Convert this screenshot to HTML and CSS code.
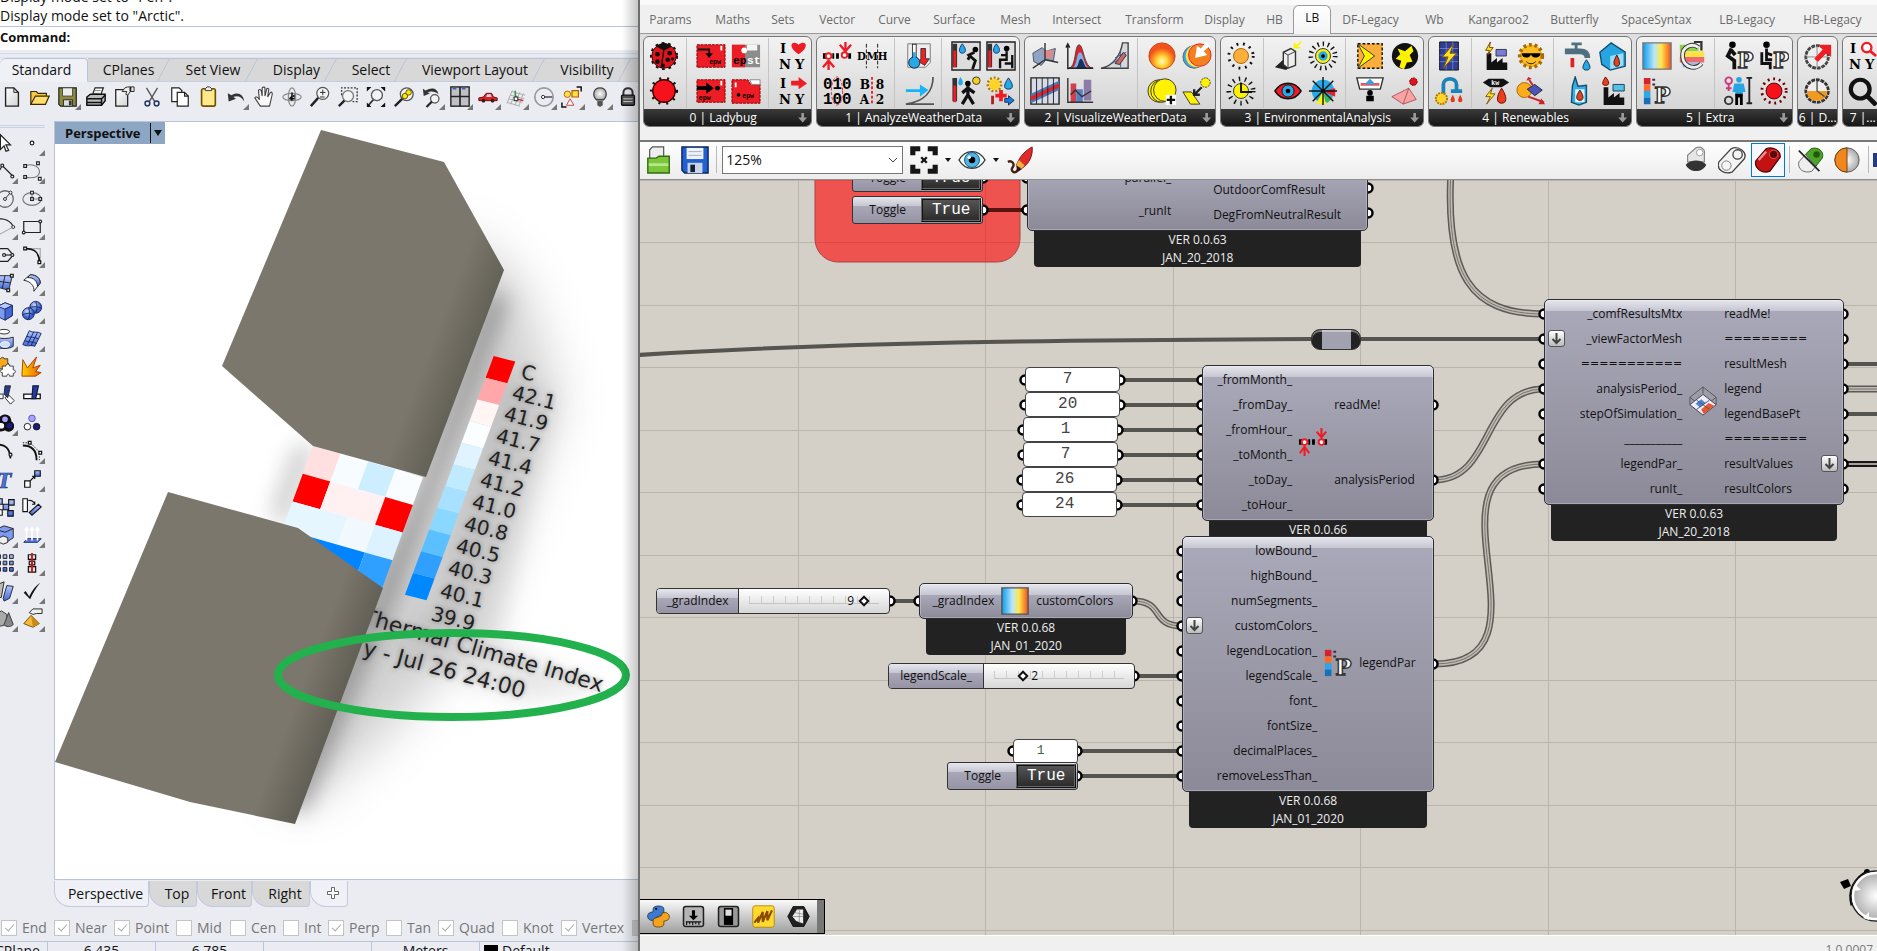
FILE: index.html
```html
<!DOCTYPE html>
<html lang="en">
<head>
<meta charset="utf-8">
<title>Rhino and Grasshopper</title>
<link rel="stylesheet" href="styles.css">
</head>
<body>
<svg class="defs" width="0" height="0" aria-hidden="true">
  <defs>
    <linearGradient id="blue" x1="0" y1="0" x2="0" y2="1"><stop offset="0" stop-color="#b4c8ff"/><stop offset="1" stop-color="#3f66d8"/></linearGradient>
    <linearGradient id="rainbow"><stop offset="0" stop-color="#0b9bef"/><stop offset=".4" stop-color="#b8e6fb"/><stop offset=".65" stop-color="#ffe84a"/><stop offset="1" stop-color="#f2501e"/></linearGradient>
    <radialGradient id="ball" cx=".4" cy=".3"><stop offset="0" stop-color="#c9d6ff"/><stop offset="1" stop-color="#3a60cf"/></radialGradient>
    <radialGradient id="glow" cx=".5" cy=".7"><stop offset="0" stop-color="#fffbd0"/><stop offset=".4" stop-color="#ffd52e"/><stop offset="1" stop-color="#f4521d"/></radialGradient>
    <radialGradient id="silver"><stop offset="0" stop-color="#fff"/><stop offset="1" stop-color="#a9a9a9"/></radialGradient>
    <linearGradient id="fire"><stop offset="0" stop-color="#ffd000"/><stop offset="1" stop-color="#e85d00"/></linearGradient>
    <linearGradient id="page" x1="0" y1="0" x2="1" y2="1"><stop offset="0" stop-color="#fff"/><stop offset="1" stop-color="#d4d4d4"/></linearGradient>
  </defs>
</svg>
<div class="desktop">
<section class="rhino">
  <div class="history"><p>Display mode set to "Pen".</p><p>Display mode set to "Arctic".</p></div>
  <div class="command">Command:</div>
  <div class="grip"></div>
  <nav class="tabs">
    <button class="tab active">Standard</button><button class="tab">CPlanes</button><button class="tab">Set View</button><button class="tab">Display</button><button class="tab">Select</button><button class="tab">Viewport Layout</button><button class="tab">Visibility</button><button class="tab" aria-label="More"></button>
  </nav>
  <div class="toolbar">
    <button class="tool" aria-label="New"><svg viewBox="0 0 24 24"><path d="M5 2h9l5 5v15H5z" fill="url(#page)" stroke="#222" stroke-width="1.5"/><path d="M14 2v5h5" fill="none" stroke="#222"/></svg></button>
    <button class="tool" aria-label="Open"><svg viewBox="0 0 24 24"><path d="M2 20V6h6l2 2h9v3" fill="#f6c845" stroke="#3b2c00" stroke-width="1.3"/><path d="M2 20l5-9h15l-4 9z" fill="#ffdc6b" stroke="#3b2c00" stroke-width="1.3"/></svg></button>
    <button class="tool more" aria-label="Save"><svg viewBox="0 0 24 24"><path d="M2 2h19v20H4l-2-2z" fill="#8d8b39" stroke="#222" stroke-width="1.3"/><path d="M6 2h11v9H6z" fill="#eee" stroke="#444"/><path d="M7 15h10v7H7z" fill="#ddd" stroke="#222"/><path d="M13 16h3v5h-3z" fill="#333"/></svg></button>
    <button class="tool" aria-label="Print"><svg viewBox="0 0 24 24"><path d="M8 10l3-8h9l-3 8z" fill="#fff" stroke="#222" stroke-width="1.3"/><path d="M10 5h7M9 8h7" stroke="#777"/><path d="M2 12l4-3h16v7l-4 5H2z" fill="#bbb" stroke="#111" stroke-width="1.6"/><path d="M2 14h16l4-4M2 18h16M18 14v7" stroke="#111" stroke-width="1.6" fill="none"/></svg></button>
    <button class="tool" aria-label="Properties"><svg viewBox="0 0 24 24"><path d="M3 4h13v18H3z" fill="url(#page)" stroke="#222" stroke-width="1.4"/><path d="M10 6l3-4 3-1h7v5h-4l-3 4-2-1 1-3h-3z" fill="#eee" stroke="#222"/><path d="M19 1v5" stroke="#222" stroke-width="2"/></svg></button>
    <button class="tool" aria-label="Cut"><svg viewBox="0 0 24 24" fill="none"><path d="M6 2l9 15M18 2L9 17" stroke="#555" stroke-width="1.5"/><circle cx="7" cy="19" r="2.6" stroke="#26315f" stroke-width="1.6"/><circle cx="17" cy="19" r="2.6" stroke="#26315f" stroke-width="1.6"/></svg></button>
    <button class="tool" aria-label="Copy"><svg viewBox="0 0 24 24" fill="#fff" stroke="#222" stroke-width="1.3"><path d="M3 2h8l3 3v12H3z"/><path d="M9 7h8l4 4v11H9z"/><path d="M17 7v4h4" fill="none"/></svg></button>
    <button class="tool" aria-label="Paste"><svg viewBox="0 0 24 24"><rect x="5" y="3" width="15" height="19" rx="2" fill="#ffe98a" stroke="#6b5200" stroke-width="1.8"/><path d="M9 5V3l2-2h3l2 2v2z" fill="#eee" stroke="#333"/></svg></button>
    <button class="tool more" aria-label="Undo"><svg viewBox="0 0 24 24"><path d="M3 8l1 9 8-3-3-2c5-2 9 0 12 5-1-8-7-11-14-7z" fill="#333"/></svg></button>
    <button class="tool" aria-label="Pan"><svg viewBox="0 0 24 24"><path d="M8 22l-6-9c1-2 3-1 5 2L6 5c1-2 2-1 3 0l1 6V2c1-1 3-1 3 0v9l2-8c1-1 3 0 2 2l-1 7 3-5c2-1 2 1 2 2l-3 13z" fill="#fafafa" stroke="#444" stroke-width="1.2"/></svg></button>
    <button class="tool" aria-label="Rotate view"><svg viewBox="0 0 24 24" fill="none" stroke="#8a8a8a" stroke-width="1.3"><ellipse cx="12" cy="12" rx="10" ry="4"/><ellipse cx="12" cy="12" rx="4" ry="10"/><path d="M12 7v9M9 14h6" stroke="#111" stroke-width="1.6"/><path d="M9 13l3-3v6zM15 9l-3 2 3 2z" fill="#111" stroke="none"/></svg></button>
    <button class="tool" aria-label="Zoom"><svg viewBox="0 0 24 24"><circle cx="15" cy="8" r="6.5" fill="#f4f4f4" stroke="#555" stroke-width="1.3"/><path d="M10 13l-8 9" stroke="#222" stroke-width="2.6"/><path d="M12 7h6M15 4v6M12 12h5" stroke="#222"/></svg></button>
    <button class="tool" aria-label="Zoom window"><svg viewBox="0 0 24 24" fill="none"><path d="M5 10V2h17v15h-5" stroke="#333" stroke-dasharray="2 1.6" stroke-width="1.4"/><circle cx="12" cy="11" r="6" fill="#f4f4f4" stroke="#777" stroke-width="1.4"/><path d="M8 16l-6 6" stroke="#222" stroke-width="2.6"/></svg></button>
    <button class="tool" aria-label="Zoom extents"><svg viewBox="0 0 24 24" fill="none"><circle cx="13" cy="10" r="6" fill="#f4f4f4" stroke="#555" stroke-width="1.4"/><path d="M9 15l-6 7" stroke="#333" stroke-width="2"/><path d="M2 1h5L2 6zM22 1v5l-5-5zM22 23h-5l5-5zM2 23v-5l5 5z" fill="#111"/></svg></button>
    <button class="tool" aria-label="Zoom selected"><svg viewBox="0 0 24 24"><circle cx="15" cy="9" r="7" fill="#f4f4f4" stroke="#555" stroke-width="1.4"/><path d="M10 14l-8 8" stroke="#222" stroke-width="2.6"/><circle cx="13" cy="11" r="3" fill="#ffe600" stroke="#5a4b00"/><circle cx="17" cy="7" r="3" fill="#ffe600" stroke="#5a4b00"/></svg></button>
    <button class="tool more" aria-label="Undo view"><svg viewBox="0 0 24 24"><path d="M2 3l1 8 7-3-3-1c4-2 9-1 12 2-1-7-8-8-14-4z" fill="#333"/><circle cx="15" cy="14" r="4.6" fill="#f4f4f4" stroke="#555" stroke-width="1.4"/><path d="M12 17l-6 6" stroke="#222" stroke-width="2.4"/></svg></button>
    <button class="tool more" aria-label="Four viewports"><svg viewBox="0 0 24 24"><rect x="2" y="1" width="20" height="21" fill="#c0c0c4" stroke="#222" stroke-width="1.5"/><path d="M12 1v21M2 11.500h20" stroke="#222" stroke-width="1.8"/><path d="M4 3h4M14 3h4" stroke="#36c" stroke-width="1.5"/></svg></button>
    <button class="tool more" aria-label="Car"><svg viewBox="0 0 24 24"><path d="M2 13l5-1 3-4h6l2 4 4 1v3H2z" fill="#e02020" stroke="#700"/><path d="M11 9h4l1 3h-6z" fill="#cde"/><circle cx="7" cy="16" r="2" fill="#222"/><circle cx="17" cy="16" r="2" fill="#222"/></svg></button>
    <button class="tool more" aria-label="Construction plane"><svg viewBox="0 0 24 24" fill="none"><path d="M8 5L2 19M12 6L6 20M16 7l-5 14M20 8l-5 14M7 6l15 4M6 10l15 4M4 14l15 4M3 18l13 4" stroke="#aaa"/><path d="M12 14l-1-9" stroke="#2a9a3a" stroke-width="1.5"/><path d="M12 14l8 2" stroke="#c22" stroke-width="1.5"/><path d="M10 12h4v4h-4z" fill="#fff" stroke="#111"/></svg></button>
    <button class="tool more" aria-label="Circle tools"><svg viewBox="0 0 24 24" fill="none"><circle cx="12" cy="12" r="10" stroke="#999" stroke-width="1.8"/><path d="M12 12h9" stroke="#222" stroke-width="1.3"/><circle cx="11" cy="12" r="1.8" fill="#fff" stroke="#222"/></svg></button>
    <button class="tool more" aria-label="Selection"><svg viewBox="0 0 24 24" fill="none"><circle cx="7" cy="9" r="3.500" fill="#ffe14a" stroke="#b35b00"/><path d="M12 5h7v7h-7z" fill="#ffe14a" stroke="#b35b00" stroke-width="1.3"/><path d="M10 14l4 7H6z" fill="#fff" stroke="#c33"/><path d="M17 1h5v5M1 18v5h5" stroke="#111" stroke-width="1.6"/></svg></button>
    <button class="tool more" aria-label="Hide"><svg viewBox="0 0 24 24"><path d="M8 15c-5-5-3-13 4-13s9 8 4 13z" fill="url(#silver)" stroke="#444" stroke-width="1.4"/><path d="M9 16h6v5l-3 2-3-2z" fill="#555"/></svg></button>
    <button class="tool" aria-label="Lock"><svg viewBox="0 0 24 24"><path d="M7 11V7c0-6 10-6 10 0v4" fill="none" stroke="#333" stroke-width="2.2"/><rect x="5" y="10" width="14" height="11" rx="1" fill="#555" stroke="#111" stroke-width="1.5"/><path d="M7 14h10M7 17h10" stroke="#ddd"/></svg></button>
  </div>
  <div class="workspace">
    <aside class="toolbox">
      <button class="tool" aria-label="Select"><svg viewBox="0 0 24 24"><path d="M7 3l11 11h-5l3 6-3 1-2-6-4 4z" fill="#fff" stroke="#222" stroke-width="1.3"/></svg></button>
      <button class="tool more" aria-label="Point"><svg viewBox="0 0 24 24"><circle cx="12" cy="12" r="2" fill="#fff" stroke="#222" stroke-width="1.3"/></svg></button>
      <button class="tool more" aria-label="Polyline"><svg viewBox="0 0 24 24" fill="#fff" stroke="#222" stroke-width="1.3"><path d="M3 17l6-11 12 12" fill="none"/><circle cx="9" cy="6" r="1.600"/><circle cx="20" cy="18" r="1.600"/></svg></button>
      <button class="tool more" aria-label="Curve"><svg viewBox="0 0 24 24" fill="#fff" stroke="#222" stroke-width="1.2"><path d="M5 6c10-3 16 3 15 8s-8 6-15 5" fill="none" stroke="#777"/><path d="M3 5h3v3H3zM17 2h3v3h-3zM3 17h3v3H3zM19 19h3v3h-3z"/></svg></button>
      <button class="tool more" aria-label="Circle"><svg viewBox="0 0 24 24" fill="#fff" stroke="#222"><circle cx="12" cy="12" r="9" fill="none" stroke="#666" stroke-width="1.4"/><path d="M12 12l6-7"/><circle cx="12" cy="12" r="1.600"/><circle cx="18" cy="5" r="1.600"/></svg></button>
      <button class="tool more" aria-label="Ellipse"><svg viewBox="0 0 24 24" fill="#fff" stroke="#222" stroke-width="1.200"><ellipse cx="12" cy="12" rx="10" ry="7" fill="none" stroke="#777"/><path d="M12 5v7h9" fill="none" stroke="#888"/><path d="M10.500 3.500h3v3h-3zM10.500 10.500h3v3h-3zM19.500 10.500h3v3h-3z"/></svg></button>
      <button class="tool more" aria-label="Arc"><svg viewBox="0 0 24 24" fill="#fff" stroke="#222"><path d="M3 4c8-3 16 2 18 8" fill="none" stroke-width="1.4"/><path d="M21 12L6 20" fill="none" stroke="#999"/><circle cx="21" cy="12" r="1.600"/></svg></button>
      <button class="tool more" aria-label="Rectangle"><svg viewBox="0 0 24 24" fill="#fff" stroke="#222" stroke-width="1.3"><path d="M3 6h18v12H3z" fill="none"/><circle cx="21" cy="6" r="1.500"/><circle cx="3" cy="18" r="1.500"/></svg></button>
      <button class="tool more" aria-label="Polygon"><svg viewBox="0 0 24 24" fill="#fff" stroke="#222" stroke-width="1.3"><path d="M4 5h11l6 7-6 7H4" fill="none"/><path d="M11 12h9"/><circle cx="11" cy="12" r="1.600"/><circle cx="20" cy="12" r="1.600"/></svg></button>
      <button class="tool more" aria-label="Fillet"><svg viewBox="0 0 24 24" fill="#fff" stroke="#111" stroke-width="1.3"><path d="M5 5h16v15" fill="none" stroke="#aaa"/><path d="M5 5c10 0 15 4 15 15" fill="none" stroke-width="2"/><path d="M3 3.500h3v3H3zM18.500 18.500h3v3h-3z"/></svg></button>
      <button class="tool more" aria-label="Surface from points"><svg viewBox="0 0 24 24" stroke="#222"><path d="M5 4h15l-4 16-14-4z" fill="url(#blue)"/><path d="M12 4l-3 14M4 10l14 2" fill="none"/><path d="M18 2.500h3v3h-3zM14 18.500h3v3h-3z" fill="#fff" stroke-width="1.400"/></svg></button>
      <button class="tool more" aria-label="Sweep"><svg viewBox="0 0 24 24" stroke="#222"><path d="M3 9l7-6c7 0 11 4 11 9l-7 9c1-6-4-11-11-12z" fill="#fff"/><path d="M7 6c7 0 11 4 11 10l3-4c0-5-4-9-11-9z" fill="url(#blue)"/></svg></button>
      <button class="tool more" aria-label="Box"><svg viewBox="0 0 24 24" stroke="#1b2c66"><path d="M4 7l8-4 8 3v11l-8 5-8-4z" fill="#7c9af0"/><path d="M4 7l8 3 8-4-8-3z" fill="#b9caff"/><path d="M12 10v12l8-5V6z" fill="#4468d4"/></svg></button>
      <button class="tool more" aria-label="Sphere"><svg viewBox="0 0 24 24" stroke="#16265c" fill="url(#ball)"><circle cx="16" cy="8" r="6.500"/><circle cx="8" cy="15" r="6.500"/><path d="M2 16c4-2 8-2 12 0M8 8c2 5 2 9 0 13M10 8c4-1 8-1 12 1M16 2c2 4 2 8 0 12" fill="none"/></svg></button>
      <button class="tool more" aria-label="Tube"><svg viewBox="0 0 24 24" stroke="#222"><ellipse cx="11" cy="4" rx="6" ry="2.500" fill="#fff"/><path d="M3 10c4 2 12 2 18 0v10c-4 3-14 3-18 1z" fill="url(#blue)"/><ellipse cx="12" cy="18" rx="5" ry="3" fill="#cfe0ff" stroke="#fff"/></svg></button>
      <button class="tool more" aria-label="Mesh"><svg viewBox="0 0 24 24" stroke="#16265c"><path d="M9 3c4 3 9 0 13 3l-7 14c-4-2-8 1-13-2z" fill="url(#blue)"/><path d="M6 9c5 2 8 0 13 3M4 14c5 2 8 0 13 3M14 4L7 18M18 5l-7 14" fill="none"/></svg></button>
      <button class="tool" aria-label="Join"><svg viewBox="0 0 24 24" stroke="#333"><path d="M3 3h4c1-2 4-2 4 0h4v5c2 0 2 3 0 3v3H3z" fill="#f7a81c"/><path d="M9 11h4c0-3 4-3 4 0h4v4c3 0 3 4 0 4v3h-4c0-3-3-3-3 0H9v-4c-3 0-3-3 0-3z" fill="#fff"/></svg></button>
      <button class="tool" aria-label="Explode"><svg viewBox="0 0 24 24"><path d="M1 22L2 4l5 9L17 1l-4 12 8-3-5 7 6 1-6 4z" fill="url(#fire)" stroke="#a33c00"/></svg></button>
      <button class="tool" aria-label="Trim"><svg viewBox="0 0 24 24" stroke="#222"><path d="M2 11h8v5H2z" fill="#fff"/><path d="M12 15l4-3 6 6-4 4z" fill="#fff"/><path d="M12 2h6l-3 13-4-4z" fill="#243c96"/></svg></button>
      <button class="tool" aria-label="Split"><svg viewBox="0 0 24 24" stroke="#111" stroke-width="1.400"><path d="M3 11h18v5H3z" fill="#fff"/><path d="M13 2h6l-3 14h-4z" fill="#243c96" stroke="#101c4c"/></svg></button>
      <button class="tool more" aria-label="Group"><svg viewBox="0 0 24 24" stroke="#111" stroke-width="1.800"><path d="M6 11c-1-10 13-10 12 0 7 5 0 13-6 8-8 5-12-5-6-8z" fill="#111"/><circle cx="12" cy="8" r="4" fill="#a9a3ff"/><circle cx="17" cy="15" r="4" fill="#1c1c80"/><circle cx="8" cy="15" r="4" fill="#fff"/></svg></button>
      <button class="tool" aria-label="Ungroup"><svg viewBox="0 0 24 24" stroke="#111"><circle cx="12" cy="7" r="3.600" fill="#a9a3ff" stroke="#5551b0"/><circle cx="7" cy="16" r="3.600" fill="#fff"/><circle cx="17" cy="16" r="3.600" fill="#1c1c80"/></svg></button>
      <button class="tool" aria-label="Edit curve"><svg viewBox="0 0 24 24" fill="none" stroke="#111" stroke-width="2"><path d="M3 5c9 0 14 3 15 15"/><circle cx="18" cy="16" r="1.600" fill="#fff" stroke-width="1.300"/></svg></button>
      <button class="tool more" aria-label="Control points"><svg viewBox="0 0 24 24" fill="none" stroke="#111"><path d="M2 6c9 0 15 5 15 16" stroke-width="2"/><path d="M2 3h8l10 10v9" stroke-dasharray="1.500 1.500"/><path d="M8 1.500h3v3H8zM19.500 12.500h3v3h-3z" fill="#fff" stroke-width="1.300"/></svg></button>
      <button class="tool" aria-label="Text"><svg viewBox="0 0 24 24"><text x="3" y="22" font-family="Liberation Serif, serif" font-weight="bold" font-style="italic" font-size="26" fill="#4d74e6" stroke="#1b2c66" stroke-width=".7">T</text></svg></button>
      <button class="tool more" aria-label="Move"><svg viewBox="0 0 24 24" stroke="#111" stroke-width="1.300"><path d="M4 14h6v7H4z" fill="#fff"/><path d="M15 3h6v6h-6z" fill="url(#blue)"/><path d="M10 14l5-5M12 9h3v3" fill="none"/></svg></button>
      <button class="tool" aria-label="Copy objects"><svg viewBox="0 0 24 24" stroke="#111" stroke-width="1.200" fill="url(#blue)"><path d="M4 3h5v6H4zM10 9h6v6h-6zM16 4h6v6h-6zM15 16h6v6h-6z"/><path d="M4 15h5v6H4z" fill="#fff"/></svg></button>
      <button class="tool" aria-label="Rotate"><svg viewBox="0 0 24 24" stroke="#111" stroke-width="1.200"><path d="M2 3h5v14H2z" fill="#fff"/><path d="M9 18L19 9l3 3-10 9z" fill="url(#blue)"/><path d="M8 5c3-1 6 1 7 4M15 6v3h-3" fill="none"/></svg></button>
      <button class="tool more" aria-label="Boolean"><svg viewBox="0 0 24 24" stroke="#222"><path d="M2 6l9-4 10 3v10l-9 6-10-4z" fill="#7c9af0"/><path d="M2 6l10 3 9-4" fill="none"/><path d="M6 15l4-2 5 2v5l-5 2-4-2z" fill="#eee"/></svg></button>
      <button class="tool more" aria-label="Extrude"><svg viewBox="0 0 24 24"><path d="M3 20l4-4h15l-4 4z" fill="#5577dd" stroke="#16265c"/><path d="M6 18V5M12 18V5M18 18V5M4 7l2-3 2 3M10 7l2-3 2 3M16 7l2-3 2 3" fill="none" stroke="#fff" stroke-width="1.800"/></svg></button>
      <button class="tool more" aria-label="Array"><svg viewBox="0 0 24 24" stroke="#111" fill="url(#blue)"><path d="M3 3h4v4H3zM10 3h4v4h-4zM17 3h4v4h-4zM3 10h4v4H3zM10 10h4v4h-4zM17 10h4v4h-4zM3 17h4v4H3zM10 17h4v4h-4zM17 17h4v4h-4z"/></svg></button>
      <button class="tool more" aria-label="Align"><svg viewBox="0 0 24 24" stroke="#111" stroke-width="1.300" fill="#ddd"><path d="M8 3h8v5H8zM9 10h6v4H9zM8 16h8v6H8z"/><path d="M12 1v22" stroke="#c11" stroke-width="2"/></svg></button>
      <button class="tool more" aria-label="Bend"><svg viewBox="0 0 24 24" stroke="#222"><path d="M2 20L6 4l5-2-3 17z" fill="#bbb"/><path d="M10 20l4-14 7 1-4 13-6 3z" fill="url(#blue)"/></svg></button>
      <button class="tool more" aria-label="Check"><svg viewBox="0 0 24 24"><path d="M3 14l2-2 4 6C12 12 15 7 21 3c-5 6-8 11-11 18z" fill="#111"/></svg></button>
      <button class="tool more" aria-label="Solids"><svg viewBox="0 0 24 24" stroke="#333"><path d="M2 8l6-5 6 4v11l-8 2-4-2z" fill="#aaa"/><path d="M16 5l5 13c-3 3-8 3-10 0z" fill="#888"/></svg></button>
      <button class="tool more" aria-label="Block"><svg viewBox="0 0 24 24"><path d="M3 17l8-9 9 9-7 4z" fill="#f5b93c" stroke="#6b4a00"/><path d="M11 8l2 13 7-4z" fill="#c98a1c"/><path d="M9 5l4-4h10v5h-6l-4 1z" fill="#eee" stroke="#222"/></svg></button>
    </aside>
    <div class="viewport-column">
      <div class="viewport">
        <svg class="scene" aria-label="Perspective view">
          <defs>
            <filter id="soft" x="-40%" y="-40%" width="180%" height="180%"><feGaussianBlur stdDeviation="24"/></filter>
            <filter id="near" x="-60%" y="-60%" width="220%" height="220%"><feGaussianBlur stdDeviation="11"/></filter>
            <linearGradient id="wall1" gradientUnits="userSpaceOnUse" x1="426" y1="358" x2="465" y2="373"><stop offset="0" stop-color="#7b776c"/><stop offset="1" stop-color="#646157"/></linearGradient>
            <linearGradient id="wall2" gradientUnits="userSpaceOnUse" x1="300" y1="691" x2="339" y2="706"><stop offset="0" stop-color="#7b776c"/><stop offset="1" stop-color="#625f56"/></linearGradient>
          </defs>
          <g transform="translate(-55 -122)">
            <path d="M460 230L520 280 560 400 470 640 380 740 310 800 270 790 430 480z" fill="#999" opacity=".45" filter="url(#soft)"/>
            <path d="M490 290L508 300 400 590 304 815 280 800 420 480z" fill="#555" opacity=".5" filter="url(#near)"/>
            <path d="M296 446L313 446 285 526 272 515z" fill="#666" opacity=".4" filter="url(#near)"/>
            <path d="M495 368L555 395 500 640 600 690 520 700 390 650 440 600z" fill="#888" opacity=".2" filter="url(#near)"/>
            <g transform="matrix(27.5 7.8 -10.2 27.7 313 446)">
              <path d="M0 0h1v1H0z" fill="#ffdfe0"/><path d="M1 0h1v1H1z" fill="#f6fcff"/><path d="M2 0h1v1H2z" fill="#cdeeff"/><path d="M3 0h1v1H3z" fill="#fafdff"/>
              <path d="M0 1h1v1H0z" fill="#f00"/><path d="M1 1h2v1H1z" fill="#fff1f1"/><path d="M3 1h1v1H3z" fill="#f00"/>
              <path d="M0 2h2v1H0z" fill="#e6f6ff"/><path d="M2 2h1v1H2z" fill="#f1f9ff"/><path d="M3 2h1v1H3z" fill="#dcf3ff"/>
              <path d="M0 3h3v1H0z" fill="#0084ff"/><path d="M3 3h1v1.100H3z" fill="#2fa0ff"/>
            </g>
            <g transform="matrix(21.600 5.600 -8.070 21.700 493.700 356)">
              <path d="M0 0h1v1H0z" fill="#f00"/><path d="M0 1h1v1H0z" fill="#ffa7a9"/><path d="M0 2h1v1H0z" fill="#fff5f5"/><path d="M0 3h1v1H0z" fill="#fafeff"/><path d="M0 4h1v1H0z" fill="#dff4ff"/><path d="M0 5h1v1H0z" fill="#c0ebff"/><path d="M0 6h1v1H0z" fill="#a8e1ff"/><path d="M0 7h1v1H0z" fill="#8ad7ff"/><path d="M0 8h1v1H0z" fill="#5bc0ff"/><path d="M0 9h1v1H0z" fill="#2fa0ff"/><path d="M0 10h1v1H0z" fill="#08f"/>
            </g>
            <g class="legend">
              <text transform="translate(520 378) rotate(14)">C</text>
              <text transform="translate(511 399) rotate(14)">42.1</text>
              <text transform="translate(503 420) rotate(14)">41.9</text>
              <text transform="translate(495 442) rotate(14)">41.7</text>
              <text transform="translate(487 464) rotate(14)">41.4</text>
              <text transform="translate(479 486) rotate(14)">41.2</text>
              <text transform="translate(471 508) rotate(14)">41.0</text>
              <text transform="translate(463 530) rotate(14)">40.8</text>
              <text transform="translate(455 552) rotate(14)">40.5</text>
              <text transform="translate(447 574) rotate(14)">40.3</text>
              <text transform="translate(439 597) rotate(14)">40.1</text>
              <text transform="translate(430 620) rotate(14)">39.9</text>
            </g>
            <g class="legend title">
              <text transform="translate(601 692) rotate(16)">Thermal Climate Index</text>
              <text transform="translate(523 698) rotate(15)">y - Jul 26 24:00</text>
            </g>
            <path d="M321 130L444 162 504 270 426 477 313 446 222 366z" fill="url(#wall1)"/>
            <path d="M168 492L298 528 383 588 295 824 190 802 55 762z" fill="url(#wall2)"/>
            <ellipse cx="452" cy="675" rx="174" ry="42" fill="none" stroke="#22b14c" stroke-width="8"/>
          </g>
        </svg>
        <button class="view-title"><span>Perspective</span><i></i></button>
      </div>
      <nav class="view-tabs">
        <button class="view-tab active">Perspective</button><button class="view-tab">Top</button><button class="view-tab">Front</button><button class="view-tab">Right</button><button class="view-tab active add" aria-label="Add viewport"><svg viewBox="0 0 12 12"><path d="M4.500 .5h3v4h4v3h-4v4h-3v-4h-4v-3h4z" fill="#fff" stroke="#666"/></svg></button>
      </nav>
    </div>
  </div>
  <div class="osnap">
    <label><input type="checkbox" checked>End</label><label><input type="checkbox" checked>Near</label><label><input type="checkbox" checked>Point</label><label><input type="checkbox">Mid</label><label><input type="checkbox">Cen</label><label><input type="checkbox">Int</label><label><input type="checkbox" checked>Perp</label><label><input type="checkbox">Tan</label><label><input type="checkbox" checked>Quad</label><label><input type="checkbox">Knot</label><label><input type="checkbox" checked>Vertex</label><label><input class="off" type="checkbox" aria-label="Project"></label>
  </div>
  <div class="rhino-status"><span>CPlane</span><span>6.435</span><span>6.785</span><span></span><span>Meters</span><span><b></b>Default</span></div>
</section>

<section class="gh">
  <nav class="gh-tabs">
    <button>Params</button><button>Maths</button><button>Sets</button><button>Vector</button><button>Curve</button><button>Surface</button><button>Mesh</button><button>Intersect</button><button>Transform</button><button>Display</button><button>HB</button><button class="current">LB</button><button>DF-Legacy</button><button>Wb</button><button>Kangaroo2</button><button>Butterfly</button><button>SpaceSyntax</button><button>LB-Legacy</button><button>HB-Legacy</button>
  </nav>
  <div class="ribbon">
    <section class="group">
      <div class="icons">
        <div class="cluster">
          <svg viewBox="0 0 32 32"><circle cx="16" cy="16" r="14" fill="none" stroke="#111" stroke-width="2" stroke-dasharray="3 4"/><circle cx="16" cy="16" r="13" fill="#e3131b" stroke="#300"/><path d="M8 6c4-5 12-5 16 0l-8 4z" fill="#111"/><path d="M16 8l-3 21" stroke="#111" stroke-width="1.500"/><g fill="#111"><circle cx="9" cy="14" r="2.500"/><circle cx="22" cy="13" r="2.500"/><circle cx="9" cy="22" r="2.500"/><circle cx="20" cy="20" r="2.500"/><circle cx="25" cy="19" r="1.800"/><circle cx="15" cy="26" r="2"/></g></svg>
          <svg viewBox="0 0 32 32"><circle cx="16" cy="16" r="13" fill="none" stroke="#111" stroke-width="4" stroke-dasharray="2 6"/><circle cx="16" cy="16" r="12" fill="#f5121c" stroke="#400" stroke-width="1.500"/></svg>
        </div>
        <div class="cluster">
          <svg viewBox="0 0 32 32"><path d="M1 4h30v24H1z" fill="#ee1c25" stroke="#7c0000" stroke-dasharray="3 1"/><path d="M2 9h12v5" fill="none" stroke="#111" stroke-width="2"/><path d="M10 13h8l-4 5z"/><path d="M27 5v5" stroke="#fff" stroke-width="2"/><text x="14" y="24" class="mini">epw</text></svg>
          <svg viewBox="0 0 32 32"><path d="M1 4h30v24H1z" fill="#8c8c8c"/><path d="M1 4h14v24H1z" fill="#ee1c25"/><circle cx="14" cy="10" r="3" fill="#fff"/><path d="M17 4h11v6H17z" fill="#f4f4f4"/><text x="2" y="24" class="mini big">ep</text><text x="17" y="25" class="mini big light">st</text></svg>
          <svg viewBox="0 0 32 32"><path d="M1 4h30v24H1z" fill="#ee1c25" stroke="#7c0000" stroke-dasharray="3 1"/><path d="M1 11h10V7l8 6-8 6v-4H1z"/><circle cx="23" cy="13" r="2.500"/><path d="M27 5v5" stroke="#fff" stroke-width="2"/><text x="3" y="26" class="mini">epw</text></svg>
          <svg viewBox="0 0 32 32"><path d="M1 4h17l3 5h10v20H1z" fill="#ee1c25" stroke="#7c0000" stroke-dasharray="3 1"/><path d="M20 4h11v5H22z" fill="#fff" stroke="#888"/><circle cx="8" cy="20" r="2"/><path d="M5 7v5" stroke="#fff" stroke-width="2"/><text x="12" y="23" class="mini">epw</text></svg>
        </div>
        <div class="cluster">
          <svg viewBox="0 0 32 32"><text x="2" y="13" class="slab">I</text><path d="M22 14C9 6 15-2 22 4c7-6 13 2 0 10z" fill="#ee1c25"/><text x="1" y="30" class="slab">N</text><text x="18" y="30" class="slab">Y</text></svg>
          <svg viewBox="0 0 32 32"><text x="2" y="13" class="slab">I</text><path d="M14 5h8V1l9 7-9 6v-4h-8z" fill="#ee1c25"/><text x="1" y="30" class="slab">N</text><text x="18" y="30" class="slab">Y</text></svg>
        </div>
      </div>
      <footer><span>0 | Ladybug</span><i></i></footer>
    </section>
    <section class="group">
      <div class="icons">
        <div class="cluster">
          <svg viewBox="0 0 32 32"><path d="M1 13h6v6H1zM11 13h2v6h-2zM15 13h3v6h-3zM28 13h3v6h-3z"/><path d="M7 31V20M1 28l6-7 6 7M25 1v11M19 4l6 7 6-7" fill="none" stroke="#ee1c25" stroke-width="2.500"/><circle cx="7" cy="16" r="3" fill="#fff" stroke="#ee1c25" stroke-width="2"/><circle cx="24" cy="15" r="3" fill="#fff" stroke="#ee1c25" stroke-width="2"/></svg>
          <svg viewBox="0 0 32 32"><text x="0" y="20" class="slab tiny">D</text><text x="10" y="20" class="slab tiny">M</text><text x="22" y="20" class="slab tiny">H</text><path d="M10 3v26M22 3v26" stroke="#111" stroke-dasharray="4 2"/></svg>
          <svg viewBox="0 0 32 32"><text x="1" y="14" class="bits">010</text><text x="1" y="30" class="bits">100</text><ellipse cx="16" cy="16" rx="6" ry="15" fill="none" stroke="#ee1c25" stroke-dasharray="3 2"/></svg>
          <svg viewBox="0 0 32 32"><text x="3" y="14" class="slab small">B</text><text x="20" y="14" class="slab small">8</text><text x="3" y="30" class="slab small">A</text><text x="20" y="30" class="slab small">2</text><path d="M16 1v30" stroke="#ee1c25" stroke-width="2" stroke-dasharray="3 2"/></svg>
        </div>
        <div class="cluster">
          <svg viewBox="0 0 32 32"><path d="M4 3h24v20l-5 5H4z" fill="#eee" stroke="#777"/><path d="M11 3v18" stroke="#333" stroke-width="5"/><path d="M11 4v18" stroke="#fff" stroke-width="3"/><circle cx="11" cy="23" r="6" fill="#25a9e8" stroke="#113"/><path d="M18 8h5v11h4l-5 7-6-4 2-3z" fill="#e22" stroke="#333"/><path d="M11 12v10" stroke="#25a9e8" stroke-width="3"/></svg>
          <svg viewBox="0 0 32 32"><path d="M31 1c0 14-8 26-29 29h30" fill="none" stroke="#555" stroke-width="1.800"/><path d="M2 14h15v-5l9 6-9 7v-5H2z" fill="#17b5f3"/></svg>
        </div>
        <div class="cluster">
          <svg viewBox="0 0 32 32"><path d="M1 1h30v30H1z" fill="#ddd" stroke="#222" stroke-width="1.500"/><path d="M4 3v25" stroke="#333" stroke-width="5"/><path d="M4 10v18" stroke="#ee1c25" stroke-width="3"/><path d="M12 3c5 6 4 10 0 10s-4-5 0-10z" fill="#25a9e8" stroke="#137"/><circle cx="26" cy="9" r="3"/><path d="M25 12l-6 3 7 6-3 9M21 14l-3 6" fill="none" stroke="#111" stroke-width="3"/></svg>
          <svg viewBox="0 0 32 32"><path d="M1 1h30v30H1z" fill="#ddd" stroke="#222" stroke-width="1.500"/><path d="M4 3v25" stroke="#333" stroke-width="5"/><path d="M4 10v18" stroke="#ee1c25" stroke-width="3"/><path d="M11 3c5 6 4 10 0 10s-4-5 0-10z" fill="#25a9e8" stroke="#137"/><circle cx="22" cy="8" r="3"/><path d="M22 11v9h-7v9M28 15v14M20 24h9M16 15h6" fill="none" stroke="#111" stroke-width="2.500"/></svg>
          <svg viewBox="0 0 32 32"><path d="M4 2v25" stroke="#333" stroke-width="5"/><path d="M4 10v18" stroke="#ee1c25" stroke-width="3"/><path d="M10 1c4 5 3 9 0 9s-3-4 0-9z" fill="#25a9e8"/><circle cx="27" cy="5" r="4" fill="#f4d11c" stroke="#333"/><circle cx="18" cy="8" r="3"/><path d="M18 11v9l-6 10M18 20l6 10M12 18l6-5 7 5" fill="none" stroke="#111" stroke-width="3.500"/></svg>
          <svg viewBox="0 0 32 32"><circle cx="9" cy="9" r="7" fill="none" stroke="#b07c00" stroke-width="3" stroke-dasharray="2 2"/><circle cx="9" cy="9" r="6" fill="#ffd327"/><path d="M24 2c6 8 5 12 0 12s-6-4 0-12z" fill="#25a9e8" stroke="#135"/><path d="M14 15h4v4h4v4h-4v4h-4v-4h-4v-4h4z" fill="#ee1c25"/><path d="M20 24h4v-3l6 5-6 5v-3h-4z" fill="#1c79d8" stroke="#135"/><path d="M7 21v9" stroke="#a22" stroke-width="3"/></svg>
        </div>
      </div>
      <footer><span>1 | AnalyzeWeatherData</span><i></i></footer>
    </section>
    <section class="group">
      <div class="icons">
        <div class="cluster">
          <svg viewBox="0 0 32 32"><path d="M3 13l10-6 4 4 10-3-2 13-8-1-5 6-8-4z" fill="#8fa4c4" stroke="#456"/><path d="M13 11l12-2-1 10-8-1z" fill="#d98a8a"/><path d="M16 2v18l14 3M16 20L3 29" fill="none" stroke="#333" stroke-width="1.500"/></svg>
          <svg viewBox="0 0 32 32"><path d="M4 29c8 0 6-25 11-25s5 25 15 25z" fill="#e2222b" stroke="#444"/><path d="M7 29c6 0 5-17 9-17s4 17 11 17z" fill="#7ab4ea"/><path d="M10 29c5 0 4-10 7-10s3 10 8 10z" fill="#17335e"/><path d="M3 30V4M1 7l2-4 2 4M3 29h27" fill="none" stroke="#222" stroke-width="1.500"/></svg>
          <svg viewBox="0 0 32 32"><path d="M1 29C14 27 22 15 24 2h6v27z" fill="#d8d8dc" stroke="#444" stroke-width="1.500"/><path d="M12 24l16-8M16 18l12-6M22 10v18" stroke="#366098"/><path d="M16 24l9-12 3 3-7 10z" fill="#c66" stroke="#333"/></svg>
          <svg viewBox="0 0 32 32"><path d="M1 2h30v28H1z" fill="#d6dbe6" stroke="#222" stroke-width="1.500"/><path d="M1 19L31 5v10L1 29z" fill="#4878b8"/><path d="M1 24L31 10" stroke="#e2222b" stroke-width="4"/><path d="M7 2v28M13 2v28M19 2v28M25 2v28" stroke="#222"/></svg>
          <svg viewBox="0 0 32 32"><path d="M6 8h6v20H6z" fill="#d0414c"/><path d="M12 14h7v14h-7z" fill="#577fc4"/><path d="M20 4h8v22h-8z" fill="#8c7ca8"/><path d="M3 2v26h27M6 20l5-5 7 7 10-6" fill="none" stroke="#333" stroke-width="1.500"/></svg>
        </div>
        <div class="cluster">
          <svg viewBox="0 0 32 32"><circle cx="16" cy="16" r="14" fill="url(#glow)" stroke="#c24a10"/></svg>
          <svg viewBox="0 0 32 32"><circle cx="13" cy="17" r="12" fill="#35a6e8" stroke="#666"/><circle cx="16" cy="16" r="12" fill="#ffe14a"/><circle cx="19" cy="15" r="12" fill="#f5801f" stroke="#d23"/><path d="M30 5l-7 6 4 4-13 3 2-13 4 3 6-7z" fill="#fff"/></svg>
          <svg viewBox="0 0 32 32"><circle cx="13" cy="16" r="12" fill="#fff200" stroke="#333"/><circle cx="16" cy="16" r="12" fill="#fff200" stroke="#333"/><circle cx="19" cy="15" r="12" fill="#fff200" stroke="#333"/><path d="M20 20h11v11H20z" fill="#fff"/><path d="M25.500 21v9M21 25.500h9" stroke="#111" stroke-width="2.500"/></svg>
          <svg viewBox="0 0 32 32"><path d="M1 17h9l9 13H9z" fill="#fff200" stroke="#333"/><circle cx="25" cy="7" r="5" fill="#fff200" stroke="#333" stroke-dasharray="2 1"/><path d="M21 12l-8 8M13 14v6h6" fill="none" stroke="#222" stroke-width="2.500"/></svg>
        </div>
      </div>
      <footer><span>2 | VisualizeWeatherData</span><i></i></footer>
    </section>
    <section class="group">
      <div class="icons">
        <div class="cluster">
          <svg viewBox="0 0 32 32"><circle cx="16" cy="16" r="13" fill="none" stroke="#111" stroke-width="3" stroke-dasharray="2 5"/><circle cx="16" cy="16" r="8" fill="#fbae3c" stroke="#a60"/></svg>
          <svg viewBox="0 0 32 32"><circle cx="16" cy="16" r="13" fill="none" stroke="#111" stroke-width="5" stroke-dasharray="1.500 5"/><circle cx="16" cy="16" r="8" fill="#fff200" stroke="#333"/><path d="M16 7v10h12" fill="none" stroke="#111" stroke-width="2"/></svg>
        </div>
        <div class="cluster">
          <svg viewBox="0 0 32 32"><path d="M2 28l10-9 12 3-10 9z" fill="#222"/><path d="M11 12l8-4 5 3v15l-8 3-5-4z" fill="#eee" stroke="#333" stroke-width="1.500"/><path d="M11 12l5 3 8-4M16 15v13" fill="none" stroke="#333"/><path d="M30 1l-6 5M23 2v5h6" fill="none" stroke="#fff200" stroke-width="2"/></svg>
          <svg viewBox="0 0 32 32"><circle cx="16" cy="16" r="13" fill="none" stroke="#111" stroke-width="5" stroke-dasharray="1.500 4"/><circle cx="16" cy="16" r="8" fill="#fff200" stroke="#333"/><circle cx="16" cy="16" r="5" fill="#25a9e8"/><circle cx="16" cy="16" r="2"/></svg>
          <svg viewBox="0 0 32 32"><path d="M2 16C9 5 23 5 30 16 23 27 9 27 2 16z" fill="#ee1c25" stroke="#111" stroke-width="1.500"/><circle cx="16" cy="16" r="6.500" fill="#25a9e8" stroke="#111"/><circle cx="16" cy="16" r="2.500"/></svg>
          <svg viewBox="0 0 32 32"><circle cx="16" cy="16" r="12" fill="#25a9e8"/><path d="M16 16l13-3v9z" fill="#ee1c25"/><path d="M16 16L9 29l10 1z" fill="#fff200"/><path d="M16 16l4 13 6-5z" fill="#3b5"/><path d="M16 1v30M1 16h30M5 5l22 22M27 5L5 27" stroke="#111" stroke-width="1.500"/></svg>
        </div>
        <div class="cluster">
          <svg viewBox="0 0 32 32"><path d="M3 3h26v26H3z" fill="#fbae3c" stroke="#111" stroke-width="1.500" stroke-dasharray="3 2"/><path d="M3 3l18 13L3 29l7-13z" fill="#fff200" stroke="#333"/></svg>
          <svg viewBox="0 0 32 32"><circle cx="16" cy="16" r="14" fill="#111"/><path d="M8 8l8 3 7-6 2 6-4 4 3 7-6 1-3 7-5-2 2-7-6-2 5-5z" fill="#fff200"/></svg>
          <svg viewBox="0 0 32 32"><path d="M2 2h28l-3 12H5z" fill="#fff" stroke="#333" stroke-width="1.500"/><path d="M6 9h20" stroke="#e55" stroke-width="3"/><path d="M16 3l6 6H10z" fill="#49d"/><circle cx="16" cy="18" r="3"/><path d="M12 21h8v6h-8zM9 31l2-5M23 31l-2-5"/></svg>
          <svg viewBox="0 0 32 32"><path d="M2 22l18-9 8 12-14 5z" fill="#f9a3a5" stroke="#a55"/><path d="M14 30l6-17" stroke="#a55"/><circle cx="25" cy="6" r="4" fill="#e2131c" stroke="#500" stroke-dasharray="2 1"/></svg>
        </div>
      </div>
      <footer><span>3 | EnvironmentalAnalysis</span><i></i></footer>
    </section>
    <section class="group">
      <div class="icons">
        <div class="cluster">
          <svg viewBox="0 0 32 32"><path d="M6 1h20v30H6z" fill="#2f3f93" stroke="#111"/><path d="M13 1v30M20 1v30M6 8h20M6 15h20M6 22h20" stroke="#8ea0ef" stroke-width=".6"/><path d="M21 3L9 17h6l-5 12 14-16h-7z" fill="#ffe420" stroke="#850"/></svg>
          <svg viewBox="0 0 32 32"><path d="M10 20V9c0-8 14-8 14 0v6" fill="none" stroke="#1b83b8" stroke-width="4"/><path d="M18 16h12" stroke="#1b83b8" stroke-width="4"/><circle cx="8" cy="24" r="6" fill="#ffd327" stroke="#a70" stroke-width="2" stroke-dasharray="2 1"/><path d="M20 20c3 5 3 8 0 8s-3-3 0-8zM28 20c3 5 3 8 0 8s-3-3 0-8z" fill="#e43a1c"/></svg>
        </div>
        <div class="cluster">
          <svg viewBox="0 0 32 32"><path d="M6 31V13h5v10l6-5v5l6-5v5h5v8z" fill="#111"/><path d="M10 1L5 10h4l-2 5 6-8H9z" fill="#ffe420" stroke="#740"/><path d="M16 9h11v7H16z" fill="#7b7bd8" stroke="#334"/></svg>
          <svg viewBox="0 0 32 32"><circle cx="16" cy="16" r="12" fill="#fbb116" stroke="#a86a00" stroke-width="4" stroke-dasharray="3 3"/><circle cx="16" cy="16" r="10" fill="#fdbb24"/><path d="M6 13h20c0 6-9 6-10 1-1 5-10 5-10-1z"/><path d="M11 22c3 3 7 3 10 0" fill="none" stroke="#111"/></svg>
          <svg viewBox="0 0 32 32"><path d="M2 7l6-4h16l6 4-8 5H10z" fill="#111"/><text x="11" y="10" class="mini light">kw</text><path d="M12 13L5 22h5l-4 8 9-11h-5z" fill="#ffe420" stroke="#850"/><path d="M22 13c6 9 6 16 0 16s-6-7 0-16z" fill="#e8401a" stroke="#700"/></svg>
          <svg viewBox="0 0 32 32"><circle cx="9" cy="15" r="8" fill="#fbae1c" stroke="#a60"/><path d="M12 14l8-5 8 6-8 6z" fill="#4b56b8" stroke="#223"/><path d="M14 4l4 6M13 22l17 6" stroke="#c22" stroke-width="2"/><path d="M11 5l2-4 4 2zM27 24l4 6-7 0z" fill="#c22"/></svg>
        </div>
        <div class="cluster">
          <svg viewBox="0 0 32 32"><path d="M2 11h16c6 0 8 3 8 7" fill="none" stroke="#4f6f80" stroke-width="6"/><path d="M14 2v8M9 3h11" stroke="#4f6f80" stroke-width="3"/><path d="M10 18v10" stroke="#d22" stroke-width="4"/><path d="M25 20c5 7 5 11 0 11s-5-4 0-11z" fill="#25a9e8" stroke="#135"/></svg>
          <svg viewBox="0 0 32 32"><path d="M2 12L14 2l15 10v15l-16 4-9-6z" fill="#27a5e2" stroke="#14506e" stroke-width="1.500"/><path d="M13 16l14-3v13l-14 4z" fill="#9fdcf7"/><path d="M20 15c4 7 4 12 0 12s-4-5 0-12z" fill="#e8401a" stroke="#222"/></svg>
          <svg viewBox="0 0 32 32"><path d="M10 11l3-10 3 10 9-1v18l-8 3-8-3z" fill="#35aee8" stroke="#14506e" stroke-width="1.500"/><path d="M13 14h10v14H13z" fill="#dff4ff"/><path d="M18 15c5 7 4 11 0 11s-5-4 0-11z" fill="#e8401a" stroke="#222"/></svg>
          <svg viewBox="0 0 32 32"><path d="M6 31V12h5v11l6-5v5l6-5v5h5v8z" fill="#111"/><path d="M8 1c5 6 4 9 0 9s-4-3 0-9z" fill="#e8401a" stroke="#700"/><path d="M16 9h12v7H16z" fill="#55c0e8" stroke="#145"/></svg>
        </div>
      </div>
      <footer><span>4 | Renewables</span><i></i></footer>
    </section>
    <section class="group">
      <div class="icons">
        <div class="cluster">
          <svg viewBox="0 0 32 32"><path d="M1 2h30v28H1z" fill="url(#rainbow)" stroke="#777" stroke-width="1.500"/></svg>
          <svg viewBox="0 0 32 32"><path d="M3 4h20v7H3z" fill="#8cd24a"/><path d="M3 11h26v6H3z" fill="#ffe14a"/><path d="M3 17h26v6H3z" fill="#ef6a6a"/><path d="M6 23h20v5H6z" fill="#9be"/><path d="M26 24c-5 7-19 5-20-7S17 2 23 7" fill="none" stroke="#333" stroke-width="5"/><path d="M26 24c-5 7-19 5-20-7S17 2 23 7" fill="none" stroke="#eee" stroke-width="3"/><path d="M18 1h8v9" fill="none" stroke="#333" stroke-width="2.500"/></svg>
          <svg viewBox="0 0 32 32"><path d="M2 2h7v7H2z" fill="#d3212d"/><path d="M2 9h7v7H2z" fill="#ff6a2a"/><path d="M2 16h7v7H2z" fill="#28a9e9"/><path d="M2 23h7v7H2z" fill="#1570b8"/><text x="13" y="29" class="pee">P</text><path d="M11 4h3M11 9h3" stroke="#333" stroke-width="2"/></svg>
        </div>
        <div class="cluster">
          <svg viewBox="0 0 32 32"><circle cx="9" cy="4" r="3.500"/><path d="M8 8l-4 8 7 5v9M7 9l5 6" fill="none" stroke="#111" stroke-width="4"/><text x="14" y="29" class="pee">P</text></svg>
          <svg viewBox="0 0 32 32"><circle cx="8" cy="4" r="3.500"/><path d="M8 8v12h6M3 12v12h9v6M8 13l6 2" fill="none" stroke="#111" stroke-width="3"/><text x="15" y="29" class="pee">P</text></svg>
          <svg viewBox="0 0 32 32"><circle cx="5" cy="5" r="3.500" fill="none" stroke="#d2347c" stroke-width="2"/><path d="M5 9v7M2 13h6" stroke="#d2347c" stroke-width="2"/><circle cx="5" cy="26" r="4" fill="none" stroke="#333" stroke-width="2"/><circle cx="16" cy="4" r="3" fill="#27a5e2"/><path d="M11 8h10l2 9h-3v4h-8v-4H9z" fill="#27a5e2"/><path d="M12 19h8v12h-3v-8h-2v8h-3z"/><path d="M27 2v27M24 2h6M24 29h6" stroke="#222" stroke-width="2"/></svg>
          <svg viewBox="0 0 32 32"><circle cx="16" cy="16" r="13" fill="none" stroke="#600" stroke-width="3" stroke-dasharray="2 4"/><circle cx="16" cy="16" r="8.500" fill="#f5121c" stroke="#500"/></svg>
        </div>
      </div>
      <footer><span>5 | Extra</span><i></i></footer>
    </section>
    <section class="group">
      <div class="icons">
        <div class="cluster">
          <svg viewBox="0 0 32 32"><circle cx="15" cy="17" r="12" fill="#eee" stroke="#444" stroke-width="3" stroke-dasharray="4 1"/><path d="M15 5v24M3 17h24" stroke="#888"/><path d="M12 19L21 9l-5-5h14v13l-5-4-9 9z" fill="#ee1c25"/></svg>
          <svg viewBox="0 0 32 32"><circle cx="15" cy="16" r="12" fill="#eee" stroke="#333" stroke-width="3" stroke-dasharray="4 1"/><path d="M4 16h22c0 14-22 14-22 0z" fill="#f29a1f"/><path d="M15 5v11l8 6" fill="none" stroke="#555" stroke-width="1.500"/></svg>
        </div>
      </div>
      <footer><span>6 | D...</span></footer>
    </section>
    <section class="group">
      <div class="icons">
        <div class="cluster">
          <svg viewBox="0 0 32 32"><text x="2" y="13" class="slab">I</text><circle cx="20" cy="7" r="5" fill="#fff" stroke="#ee1c25" stroke-width="2.500"/><path d="M24 11l6 5" stroke="#ee1c25" stroke-width="3"/><text x="1" y="30" class="slab">N</text><text x="18" y="30" class="slab">Y</text></svg>
          <svg viewBox="0 0 32 32"><circle cx="13" cy="14" r="10" fill="none" stroke="#111" stroke-width="4.500"/><path d="M20 21l10 10" stroke="#111" stroke-width="5"/></svg>
        </div>
      </div>
      <footer><span>7 |...</span></footer>
    </section>
  </div>
  <div class="canvas-bar">
    <button class="bar-icon" aria-label="Open file"><svg viewBox="0 0 30 30"><path d="M5 14V4l3-3h12v14z" fill="#eee" stroke="#555" stroke-width="1.300"/><path d="M3 29V13h9l3-2h11v18z" fill="#7cc53c" stroke="#2f6d0c" stroke-width="1.500"/><path d="M4 20h21" stroke="#b5e887" stroke-width="3"/></svg></button>
    <button class="bar-icon" aria-label="Save file"><svg viewBox="0 0 30 30"><path d="M1 1h28v28H4l-3-3z" fill="#2360cf" stroke="#0c2458" stroke-width="1.500"/><path d="M6 2h18v12H6z" fill="#eef3fb"/><path d="M8 6h14M8 10h14" stroke="#aab"/><path d="M7 18h16v11H7z" fill="#c7d4ea"/><path d="M10 20h5v8h-5z" fill="#123"/></svg></button>
    <span class="bar-sep"></span>
    <div class="zoom"><select aria-label="Zoom"><option>125%</option></select><svg viewBox="0 0 10 6"><path d="M1 1l4 4 4-4" fill="none" stroke="#444"/></svg></div>
    <button class="bar-icon" aria-label="Zoom extents"><svg viewBox="0 0 30 30"><path d="M3 10V3h8M19 3h8v7M27 20v7h-8M11 27H3v-7" fill="none" stroke="#161616" stroke-width="5.500"/><path d="M12 12l6 6M18 12l-6 6" stroke="#161616" stroke-width="2.500"/></svg></button><i class="caret"></i>
    <button class="bar-icon" aria-label="Named views"><svg viewBox="0 0 30 30"><path d="M1 15C8 3 22 3 29 15 22 27 8 27 1 15z" fill="#f3fbff" stroke="#333" stroke-width="1.400"/><circle cx="15" cy="15" r="8" fill="#4db6e8" stroke="#14506e"/><circle cx="15" cy="15" r="3.500"/><circle cx="12" cy="12" r="1.800" fill="#fff"/></svg></button><i class="caret"></i>
    <button class="bar-icon" aria-label="Sketch"><svg viewBox="0 0 30 30"><path d="M2 17c4-2 8 2 5 6s3 8 6 2" fill="none" stroke="#421" stroke-width="2.500"/><path d="M11 21C15 10 21 5 28 1c1 9-3 18-11 23z" fill="#df2a2a" stroke="#7a1010"/><path d="M11 21c1-3 2-5 3-6l6 6-3 3z" fill="#f2b33c"/><path d="M11 21l6 4-5 3z" fill="#311"/></svg></button>
    <span class="spacer"></span>
    <button class="bar-icon" aria-label="No preview"><svg viewBox="0 0 30 30"><path d="M6 17V10l9-8c5-2 10 1 9 6v9z" fill="#e6e6e6" stroke="#888" stroke-width="1.300"/><circle cx="19" cy="7" r="3.500" fill="#fff" stroke="#999"/><path d="M4 20c6-6 16-6 22 0-4 9-18 9-22 0z" fill="#333"/></svg></button>
    <button class="bar-icon" aria-label="Wireframe preview"><svg viewBox="0 0 30 30"><path d="M1 17L14 3c8-4 18 4 14 11L15 28C6 31-2 25 1 17z" fill="#f4f4f4" stroke="#444" stroke-width="1.400"/><circle cx="21" cy="9" r="5" fill="none" stroke="#444" stroke-width="1.400"/><circle cx="9" cy="21" r="5" fill="none" stroke="#777"/></svg></button>
    <button class="bar-icon chosen" aria-label="Shaded preview"><svg viewBox="0 0 30 30"><path d="M2 16L13 3c7-3 16 2 15 9L17 27C9 30 0 24 2 16z" fill="#c41212" stroke="#5a0505" stroke-width="1.400"/><path d="M5 15l8-9" stroke="#f08b8b" stroke-width="2.500"/><circle cx="21" cy="9" r="4.500" fill="#5a0808" stroke="#e55"/></svg></button>
    <span class="bar-sep"></span>
    <button class="bar-icon" aria-label="Selected preview"><svg viewBox="0 0 30 30"><path d="M9 9l6-6c7-3 15 3 12 10l-7 9z" fill="#4da32a" stroke="#1f5a0c"/><path d="M2 17l7-8 11 13-4 5C8 30 0 25 2 17z" fill="#eee" stroke="#666"/><circle cx="21" cy="9" r="3.500" fill="#1f5a0c"/><path d="M2 5l22 22" stroke="#222" stroke-width="1.800"/></svg></button>
    <button class="bar-icon" aria-label="Mesh quality"><svg viewBox="0 0 30 30"><circle cx="15" cy="15" r="13" fill="url(#silver)" stroke="#555"/><path d="M15 2a13 13 0 000 26z" fill="#f0871e" stroke="#743a00"/></svg></button>
    <span class="bar-sep"></span>
    <span class="bar-edge"></span>
  </div>
  <main class="canvas">
    <svg class="wires" aria-hidden="true">
      <g transform="translate(-640 -180)">
        <path class="grid" d="M798.500 180v755M985.500 180v755M1173.500 180v755M1360.500 180v755M1548.500 180v755M1735.500 180v755M640 180.500h1400M640 242.500h1400M640 305.500h1400M640 367.500h1400M640 430.500h1400M640 492.500h1400M640 555.500h1400M640 617.500h1400M640 680.500h1400M640 742.500h1400M640 805.500h1400M640 867.500h1400M640 930.500h1400"/>
        <path d="M815 170h205v68c0 14-10 24-24 24H839c-14 0-24-10-24-24z" fill="#f00" fill-opacity=".6" stroke="#a44"/>
        <path class="wire dark" d="M984 210h43M984 178h43"/>
        <path class="wire" d="M638 355C850 342 1050 340 1312 339M1361 339h183M1122 380h80M1122 405h80M1119 430h83M1119 455h83M1118 480h84M1118 505h84M891 601h28M1136 676h46M1078 751h104M1078 776h104M1844 364h50M1844 414h50"/>
        <path class="double" d="M1451 170C1445 275 1470 314 1544 314M1434 480C1495 480 1480 389 1544 389M1434 664C1565 664 1410 464 1544 464M1133 601C1165 601 1150 626 1182 626M1844 389h50"/>
        <path class="double inner" d="M1451 170C1445 275 1470 314 1544 314M1434 480C1495 480 1480 389 1544 389M1434 664C1565 664 1410 464 1544 464M1133 601C1165 601 1150 626 1182 626M1844 389h50"/>
        <path class="double core" d="M1451 170C1445 275 1470 314 1544 314M1434 480C1495 480 1480 389 1544 389M1434 664C1565 664 1410 464 1544 464M1133 601C1165 601 1150 626 1182 626M1844 389h50"/>
        <path d="M1844 464h50" stroke="#1e1614" stroke-width="6"/><path d="M1844 464h50" stroke="#d4cfc7" stroke-width="1.500"/>
        <g class="ports">
          <circle cx="983" cy="178" r="4.500"/><circle cx="983" cy="210" r="4.500"/><circle cx="1027" cy="178" r="4.500"/><circle cx="1027" cy="210" r="4.500"/><circle cx="1368" cy="188" r="4.500"/><circle cx="1368" cy="213" r="4.500"/>
          <circle cx="1025" cy="380" r="4.500"/><circle cx="1025" cy="405" r="4.500"/><circle cx="1023" cy="430" r="4.500"/><circle cx="1023" cy="455" r="4.500"/><circle cx="1022" cy="480" r="4.500"/><circle cx="1022" cy="505" r="4.500"/>
          <circle cx="1120" cy="380" r="4.500"/><circle cx="1120" cy="405" r="4.500"/><circle cx="1118" cy="430" r="4.500"/><circle cx="1118" cy="455" r="4.500"/><circle cx="1117" cy="480" r="4.500"/><circle cx="1117" cy="505" r="4.500"/>
          <circle cx="1202" cy="380" r="4.500"/><circle cx="1202" cy="405" r="4.500"/><circle cx="1202" cy="430" r="4.500"/><circle cx="1202" cy="455" r="4.500"/><circle cx="1202" cy="480" r="4.500"/><circle cx="1202" cy="505" r="4.500"/><circle cx="1433" cy="405" r="4.500"/><circle cx="1433" cy="480" r="4.500"/>
          <circle cx="1544" cy="314" r="4.500"/><circle cx="1544" cy="339" r="4.500"/><circle cx="1544" cy="364" r="4.500"/><circle cx="1544" cy="389" r="4.500"/><circle cx="1544" cy="414" r="4.500"/><circle cx="1544" cy="439" r="4.500"/><circle cx="1544" cy="464" r="4.500"/><circle cx="1544" cy="489" r="4.500"/>
          <circle cx="1843" cy="314" r="4.500"/><circle cx="1843" cy="339" r="4.500"/><circle cx="1843" cy="364" r="4.500"/><circle cx="1843" cy="389" r="4.500"/><circle cx="1843" cy="414" r="4.500"/><circle cx="1843" cy="439" r="4.500"/><circle cx="1843" cy="464" r="4.500"/><circle cx="1843" cy="489" r="4.500"/>
          <circle cx="1182" cy="551" r="4.500"/><circle cx="1182" cy="576" r="4.500"/><circle cx="1182" cy="601" r="4.500"/><circle cx="1182" cy="626" r="4.500"/><circle cx="1182" cy="651" r="4.500"/><circle cx="1182" cy="676" r="4.500"/><circle cx="1182" cy="701" r="4.500"/><circle cx="1182" cy="726" r="4.500"/><circle cx="1182" cy="751" r="4.500"/><circle cx="1182" cy="776" r="4.500"/><circle cx="1433" cy="664" r="4.500"/>
          <circle cx="890" cy="601" r="4.500"/><circle cx="919" cy="601" r="4.500"/><circle cx="1132" cy="601" r="4.500"/><circle cx="1134" cy="676" r="4.500"/><circle cx="1013" cy="751" r="4.500"/><circle cx="1077" cy="751" r="4.500"/><circle cx="1077" cy="776" r="4.500"/>
        </g>
        <g><path d="M1853 905c-4-14 2-26 16-33" fill="none" stroke="#000" stroke-width="5"/><path d="M1840 882l8-3 3 7-7 3z"/><circle cx="1867" cy="872" r="3"/><circle cx="1876" cy="896" r="25" fill="url(#silver)" stroke="#222" stroke-width="1.500"/><circle cx="1876" cy="896" r="23" fill="none" stroke="#fff" stroke-width="2.500"/><path d="M1855 884l6 6-8 1zM1863 918l6-6v8z" fill="#fff"/></g>
      </g>
    </svg>

    <div class="node n-comfort">
      <div class="body"><ul class="in tall"><li>parallel_</li><li>_runIt</li></ul><span></span><ul class="out low"><li>OutdoorComfResult</li><li>DegFromNeutralResult</li></ul></div>
      <p class="ver">VER 0.0.63<br>JAN_20_2018</p>
    </div>
    <div class="toggle t-one"><span>Toggle</span><button>True</button></div>
    <div class="toggle t-two"><span>Toggle</span><button>True</button></div>
    <div class="relay"></div>
    <div class="panels">
      <div class="panel">7</div><div class="panel">20</div><div class="panel mid">1</div><div class="panel mid">7</div><div class="panel far">26</div><div class="panel far">24</div>
    </div>
    <div class="node n-period">
      <div class="body"><ul class="in"><li>_fromMonth_</li><li>_fromDay_</li><li>_fromHour_</li><li>_toMonth_</li><li>_toDay_</li><li>_toHour_</li></ul>
        <svg class="glyph" viewBox="0 0 32 32"><path d="M1 13h6v6H1zM11 13h2v6h-2zM15 13h3v6h-3zM28 13h3v6h-3z"/><path d="M7 31V20M2 28l5-7 5 7M25 1v11M20 5l5 6 5-6" fill="none" stroke="#ee1c25" stroke-width="2.200"/><circle cx="7" cy="16" r="3" fill="#fff" stroke="#ee1c25" stroke-width="2"/><circle cx="25" cy="16" r="3" fill="#fff" stroke="#ee1c25" stroke-width="2"/></svg>
        <ul class="out"><li>readMe!</li><li>analysisPeriod</li></ul></div>
      <p class="ver">VER 0.0.66</p>
    </div>
    <div class="node n-legend">
      <div class="body"><ul class="in"><li>lowBound_</li><li>highBound_</li><li>numSegments_</li><li><b class="down"><svg viewBox="0 0 11 13"><path d="M5.500 1v10M1.500 7l4 4 4-4"/></svg></b>customColors_</li><li>legendLocation_</li><li>legendScale_</li><li>font_</li><li>fontSize_</li><li>decimalPlaces_</li><li>removeLessThan_</li></ul>
        <svg class="glyph" viewBox="0 0 32 32"><path d="M2 2h7v7H2z" fill="#d3212d"/><path d="M2 9h7v7H2z" fill="#ff6a2a"/><path d="M2 16h7v7H2z" fill="#28a9e9"/><path d="M2 23h7v7H2z" fill="#1570b8"/><path d="M11 4h3M11 9h3" stroke="#333" stroke-width="2"/><text x="13" y="29" class="pee">P</text></svg>
        <ul class="out"><li>legendPar</li></ul></div>
      <p class="ver">VER 0.0.68<br>JAN_01_2020</p>
    </div>
    <div class="node n-result">
      <div class="body"><ul class="in"><li>_comfResultsMtx</li><li><b class="down"><svg viewBox="0 0 11 13"><path d="M5.500 1v10M1.500 7l4 4 4-4"/></svg></b>_viewFactorMesh</li><li class="rule">===========</li><li>analysisPeriod_</li><li>stepOfSimulation_</li><li>___________</li><li>legendPar_</li><li>runIt_</li></ul>
        <svg class="glyph" viewBox="0 0 32 32"><path d="M2 12L16 1l14 11-14 11zM2 12v8M30 12v8M16 1v7" fill="none" stroke="#555"/><path d="M2 20L16 9l14 11-14 11z" fill="#eef" stroke="#444"/><path d="M8 19l6-5 5 4-6 5z" fill="#4a83d8"/><path d="M14 25l8-7 6 3-11 9z" fill="#e8582e"/><path d="M9 15l14 10M23 15L9 25" stroke="#555"/></svg>
        <ul class="out"><li>readMe!</li><li class="rule">=========</li><li>resultMesh</li><li>legend</li><li>legendBasePt</li><li class="rule">=========</li><li>resultValues<b class="down"><svg viewBox="0 0 11 13"><path d="M5.500 1v10M1.500 7l4 4 4-4"/></svg></b></li><li>resultColors</li></ul></div>
      <p class="ver">VER 0.0.63<br>JAN_20_2018</p>
    </div>
    <div class="node n-colors">
      <div class="body"><ul class="in"><li>_gradIndex</li></ul>
        <svg class="glyph" viewBox="0 0 32 32"><path d="M2 2h28v28H2z" fill="url(#rainbow)" stroke="#555" stroke-width="1.500"/></svg>
        <ul class="out"><li>customColors</li></ul></div>
      <p class="ver">VER 0.0.68<br>JAN_01_2020</p>
    </div>
    <label class="slider s-grad"><span>_gradIndex</span><em>9</em><input type="range" min="0" max="11" value="10"></label>
    <label class="slider s-scale"><span>legendScale_</span><em>2</em><input type="range" min="0" max="10" value="2"></label>
    <div class="panel p-decimals">1</div>
    <div class="toggle t-three"><span>Toggle</span><button>True</button></div>
    <div class="recent">
      <svg viewBox="0 0 30 30"><path d="M8 9V5c0-5 14-5 14 0v6c0 4-12 2-12 9H5c-6-2-6-11 3-11z" fill="#3f79d8" stroke="#133" /><path d="M22 21v4c0 5-14 5-14 0v-5c0-5 12-2 12-10h5c6 2 6 11-3 11z" fill="#f5a21c" stroke="#530"/><circle cx="12" cy="5" r="1.500"/></svg>
      <svg viewBox="0 0 30 30"><rect x="2" y="2" width="26" height="26" rx="3" fill="#b5b5b5" stroke="#222" stroke-width="2"/><path d="M13 7h4v7h4l-6 6-6-6h4z"/><path d="M5 22h20M6 22v4M10 22v3M14 22v4M18 22v3M22 22v4" stroke="#111" stroke-width="1.500"/></svg>
      <svg viewBox="0 0 30 30"><rect x="2" y="2" width="26" height="26" rx="3" fill="#999" stroke="#222" stroke-width="2"/><path d="M9 4h12v22H9z"/><path d="M11 6h8v8h-8z" fill="#ddd"/></svg>
      <svg viewBox="0 0 30 30"><rect x="1" y="1" width="28" height="28" rx="3" fill="#ffd92e" stroke="#a67c00"/><path d="M3 23l5-6v6l6-14v13l6-14v12l6-13" fill="none" stroke="#8a4a00" stroke-width="2.800"/></svg>
      <svg viewBox="0 0 30 30"><path d="M8 2h14l7 13-7 13H8L1 15z" fill="#222" stroke="#000"/><path d="M13 6h8v18l-9-3-5-6z" fill="#eee"/><path d="M16 6v17M8 15h13M10 10l11 2" stroke="#888"/></svg>
    </div>
  </main>
  <div class="gh-status">1.0.0007</div>
</section>
</div>
</body>
</html>
```
FILE: styles.css
```css
* { box-sizing: border-box; }
html, body { height: 100%; }
body { margin: 0; overflow: hidden; font: 14px/20px "Open Sans", "Noto Sans", sans-serif; color: #111; background: #e9ebf0; }
button, input, select { font: inherit; color: inherit; margin: 0; }
button { border: 0; padding: 0; background: none; }
ul, p { margin: 0; padding: 0; list-style: none; }
.defs { position: absolute; }
.desktop { display: flex; height: 100vh; }

/* Modelling window */
.rhino { position: relative; flex: 0 0 34%; min-width: 0; display: flex; flex-direction: column; overflow: hidden; background: #eaecf1; }
.rhino::after { content: ""; position: absolute; inset: 0 0 0 auto; width: 16px; background: linear-gradient(90deg, transparent, rgba(0,0,0,.22)); pointer-events: none; }
.history { flex: none; height: 27px; display: flex; flex-direction: column; justify-content: flex-end; background: #fff; border-bottom: 1px solid #b8c3d8; overflow: hidden; }
.history p { flex: none; height: 19px; line-height: 18px; }
.command { flex: none; height: 23px; line-height: 21px; font-weight: bold; font-size: 13px; background: #fff; }
.grip { flex: none; height: 8px; border-bottom: 1px solid #dde2ec; box-shadow: inset 0 3px #eaecf1, inset 0 4px #d3dae6; }
.tabs { flex: none; height: 24px; display: grid; grid-template-columns: 88px 81px 88px 79px 70px 138px 86px 1fr; }
.tab { position: relative; background: #d8d8d8; border-top: 1px solid #b9c4da; border-bottom: 1px solid #c5cde0; text-align: center; line-height: 22px; overflow: visible; }
.tab + .tab + .tab::before { content: ""; position: absolute; left: -6px; top: 0; height: 22px; border-left: 1px solid #b9c4da; transform: skewX(-28deg); }
.tab.active { background: #eff1f6; border-bottom-color: #eff1f6; border-right: 1px solid #b9c4da; border-radius: 6px 4px 0 0; padding-right: 4px; }
.toolbar { flex: none; height: 39px; display: flex; align-items: flex-start; gap: 1px; padding: 2px 0 0; margin-left: -2px; overflow: hidden; }
.tool { position: relative; flex: none; width: 27px; height: 26px; display: grid; place-items: center; }
.tool svg { width: 22px; height: 22px; }
.tool.more::after { content: ""; position: absolute; right: 0; bottom: 0; border: 3px solid; border-color: transparent #777 #777 transparent; }
.workspace { flex: 1; min-height: 0; display: flex; }
.toolbox { flex: 0 0 54px; display: grid; grid-template-columns: 27px 27px; grid-auto-rows: 28px; margin-left: -9px; margin-right: 9px; padding-top: 9px; background: linear-gradient(#c8d2e4, #c8d2e4) 0 4px / 57px 1px no-repeat, linear-gradient(#c8d2e4, #c8d2e4) 0 6px / 57px 1px no-repeat; }
.viewport-column { flex: 1; min-width: 0; display: flex; flex-direction: column; }
.viewport { position: relative; flex: 1; min-height: 0; background: #fff; border: solid #b9c4da; border-width: 1px 0 1px 1px; overflow: hidden; }
.scene { display: block; width: 100%; height: 100%; }
.legend text { font: 20px "DejaVu Sans", sans-serif; fill: #222; text-shadow: 0 0 5px rgba(0,0,0,.4); }
.legend.title text { font-size: 22px; text-anchor: end; }
.view-title { position: absolute; left: 0; top: 0; height: 22px; line-height: 20px; display: flex; align-items: center; background: #8da6c3; font-size: 13px; font-weight: bold; padding-left: 10px; }
.view-title span { padding-right: 9px; border-right: 1px solid #111; }
.view-title i { margin: 0 3px; border: solid transparent; border-width: 6px 4px 0; border-top-color: #111; }
.view-tabs { flex: none; height: 30px; padding-top: 1px; display: grid; grid-template-columns: 95px 48px 55px 58px 38px; align-items: start; }
.view-tab { position: relative; height: 26px; padding-left: 8px; background: #d8d8d8; border: 1px solid #c2cadf; border-top: 0; border-radius: 0 0 4px 16px; text-align: center; }
.view-tab.active { background: #eff1f6; }
.add svg { width: 12px; height: 12px; }
.osnap { flex: none; height: 31px; display: grid; grid-template-columns: 53px 60px 62px 54px 53px 45px 58px 52px 64px 59px 71px 1fr; align-items: center; padding: 4px 0 0 1px; color: #777; overflow: hidden; }
.osnap label { display: flex; align-items: center; gap: 5px; white-space: nowrap; }
.osnap input { appearance: none; position: relative; flex: none; width: 16px; height: 16px; border: 1px solid #c4c4c4; background: #fff; }
.osnap input:checked::after { content: ""; position: absolute; left: 5px; top: 1px; width: 4px; height: 8px; border: solid #aaa; border-width: 0 1px 1px 0; transform: rotate(42deg); }
.osnap .off { background: #ccc; }
.rhino-status { flex: none; height: 10px; display: grid; grid-template-columns: 48px 108px 108px 108px 108px 1fr; border-top: 1px solid #b9c4da; overflow: hidden; line-height: 18px; }
.rhino-status span { height: 20px; border-right: 1px solid #b9c4da; text-align: center; }
.rhino-status span:first-child { margin-left: -12px; }
.rhino-status span:last-child { text-align: left; padding-left: 4px; border: 0; }
.rhino-status b { display: inline-block; width: 14px; height: 14px; margin-right: 4px; background: #000; vertical-align: -3px; }

/* Node editor window */
.gh { flex: 1; min-width: 0; display: flex; flex-direction: column; background: #f0f0f0; border-left: 2px solid #6e6e6e; overflow: hidden; font-size: 12px; }
.gh-tabs { flex: none; height: 34px; display: grid; grid-template-columns: 66px 56px 48px 59px 55px 67px 52px 73px 79px 62px 38px 38px 83px 43px 82px 71px 98px 84px 84px; padding: 5px 0 0 9px; background: linear-gradient(#fafafa 5px, #f0f0f0 5px); border-bottom: 1px solid #9a9a9a; color: #6b6b6b; }
.gh-tabs button { text-align: left; padding-top: 1px; white-space: nowrap; }
.gh-tabs .current { margin: 0 11px 0 -11px; padding: 0 0 4px; height: 29px; text-align: center; color: #111; background: linear-gradient(#fff, #f4f4f4); border: 1px solid #9a9a9a; border-bottom: 0; border-radius: 6px 6px 0 0; }
.ribbon { flex: none; height: 106px; display: flex; align-items: flex-start; gap: 4px; padding: 2px 0 0 3px; background: linear-gradient(#dedede, #f0f0f0 90px); overflow: hidden; }
.group { flex: none; border: 1px solid #777; border-radius: 6px; background: linear-gradient(#f2f2f2, #cfcfcf); overflow: hidden; }
.icons { display: flex; height: 72px; padding: 1px 1px 1px 2px; }
.cluster { display: grid; grid-template-rows: 35px 35px; grid-auto-columns: 35px; place-items: center; }
.cluster + .cluster { margin-left: 5px; padding-left: 6px; border-left: 1px solid #c4c4c4; }
.cluster:has(svg:nth-child(3)) { grid-template-columns: 35px 35px; }
.cluster:has(svg:nth-child(5)) { grid-template-columns: 35px 35px 35px; }
.cluster svg { width: 30px; height: 30px; }
.group footer { display: flex; align-items: center; height: 17px; line-height: 17px; padding: 0 4px; background: linear-gradient(#3a3a3a, #161616); color: #fff; }
.group footer span { flex: 1; text-align: center; white-space: nowrap; overflow: hidden; }
.group footer i { width: 9px; height: 10px; background: #999; clip-path: polygon(35% 0, 65% 0, 65% 50%, 100% 50%, 50% 100%, 0 50%, 35% 50%); }
.group:nth-child(n+7) { width: 41px; }
.group:nth-child(n+7) footer { padding: 0; }
.mini { font: bold 7px "Liberation Mono", monospace; }
.mini.big { font-size: 12px; }
.light { fill: #fff; }
.slab { font: bold 14px "DejaVu Serif", serif; }
.slab.small { font-size: 13px; }
.slab.tiny { font-size: 11px; }
.bits { font: bold 17px "Liberation Mono", monospace; }
.pee { font: bold 23px "DejaVu Serif", serif; fill: #fff; stroke: #333; stroke-width: 1.5px; }

.canvas-bar { flex: none; height: 40px; display: flex; align-items: center; padding: 0 0 2px 2px; border-top: 2px solid #777; border-bottom: 1px solid #8f8f8f; background: linear-gradient(#fff, #ececec); }
.bar-icon { flex: none; width: 34px; height: 34px; display: grid; place-items: center; }
.bar-icon + .bar-icon { margin-left: 2px; }
.bar-icon svg { width: 28px; height: 28px; }
.bar-icon.chosen { border: 1px solid #0078d7; background: #f4faff; }
.bar-sep { width: 1px; height: 27px; margin: 0 4px; background: #bbb; }
.spacer { flex: 1; }
.bar-edge { width: 4px; height: 14px; background: #223a88; }
.zoom { position: relative; width: 181px; height: 28px; margin: 0 4px 0 1px; }
.zoom select { appearance: none; width: 100%; height: 100%; padding: 0 3px; border: 1px solid #777; border-radius: 0; background: #fff; font-size: 14px; }
.zoom svg { position: absolute; right: 5px; top: 11px; width: 10px; height: 6px; pointer-events: none; }
.caret { margin: 0 4px; border: solid transparent; border-width: 4px 3px 0; border-top-color: #111; }

.canvas { position: relative; flex: 1; min-height: 0; overflow: hidden; background: #d4cfc7; }
.wires { position: absolute; inset: 0; width: 100%; height: 100%; }
.grid { fill: none; stroke: #b9b5ad; }
.wire { fill: none; stroke: #55544e; stroke-width: 4; }
.wire.dark { stroke: #5a1410; }
.double { fill: none; stroke: #5c5b55; stroke-width: 7; }
.double.inner { stroke: #bfbbb3; stroke-width: 4; }
.double.core { stroke: #77756e; stroke-width: 1; }
.ports circle { fill: #fff; stroke: #000; stroke-width: 2.5; }

.node { position: absolute; }
.body { display: grid; padding: 1px 0 3px; border: 1px solid #2c2c33; border-radius: 5px; background: linear-gradient(#e6e6ee, #c6c6d2 11px, #a9a8b8 11px, #8c8a98); box-shadow: inset 0 0 0 1px rgba(255,255,255,.25); }
.in, .out { display: flex; flex-direction: column; white-space: nowrap; }
.in { text-align: right; }
.in li, .out li { position: relative; flex: 1 0 25px; display: flex; align-items: center; }
.in li { justify-content: flex-end; }
.in.tall li { flex: 0 0 33px; }
.out.low { justify-content: flex-end; }
.out.low li { flex: 0 0 25px; }
.rule { font-family: "DejaVu Sans", sans-serif; font-size: 11px; }
.glyph { width: 30px; height: 30px; place-self: center; }
.ver { margin: 0 7px; background: #222; color: #eee; text-align: center; line-height: 18px; border-radius: 0 0 4px 4px; }
.down { position: absolute; left: 3px; width: 17px; height: 17px; display: grid; place-items: center; border: 1px solid #555; border-radius: 3px; background: linear-gradient(#fff, #bbb); }
.down svg { width: 11px; height: 13px; fill: none; stroke: #444; stroke-width: 2px; }
.out .down { left: auto; right: 5px; }
.n-comfort { left: 387px; top: -21px; width: 341px; }
.n-comfort .body { grid-template-columns: 143px 42px 1fr; }
.n-period { left: 562px; top: 185px; width: 232px; }
.n-period .body { grid-template-columns: 89px 42px 1fr; }
.n-legend { left: 542px; top: 356px; width: 252px; }
.n-legend .body { grid-template-columns: 134px 42px 1fr; }
.n-result { left: 904px; top: 119px; width: 300px; }
.n-result .body { grid-template-columns: 137px 42px 1fr; }
.n-colors { left: 279px; top: 403px; width: 214px; }
.n-colors .body { grid-template-columns: 74px 42px 1fr; padding: 2px 0; }

.toggle { position: absolute; width: 131px; height: 28px; display: grid; grid-template-columns: 1fr 60px; align-items: center; padding: 1px; border: 1px solid #333; border-radius: 3px; background: linear-gradient(#e6e6ee, #c6c6d2 9px, #a9a8b8 9px, #9694a4); }
.toggle span { text-align: center; }
.toggle button { height: 24px; border: 2px ridge #666; background: linear-gradient(#555, #2c2c2c); color: #fff; font: 16px/18px "Liberation Mono", monospace; }
.t-one { left: 212px; top: -16px; }
.t-two { left: 212px; top: 16px; }
.t-three { left: 307px; top: 582px; }
.panels { position: absolute; left: 382px; top: 187px; display: flex; flex-direction: column; }
.panel { width: 95px; height: 25px; margin-left: 3px; padding-right: 10px; border: 1px solid #444; border-radius: 4px; background: #fff; text-align: center; color: #444; font: 16px/22px "Liberation Mono", monospace; }
.panel.mid { margin-left: 1px; }
.panel.far { margin-left: 0; }
.panel.p-decimals { position: absolute; left: 370px; top: 559px; width: 65px; font-size: 13px; color: #3a6b3a; }
.relay { position: absolute; left: 671px; top: 149px; width: 50px; height: 21px; border: 1px solid #333; border-radius: 9px; background: linear-gradient(90deg, #222 10px, #a2a1b0 10px, #a2a1b0 39px, #222 39px); box-shadow: inset 0 2px rgba(255,255,255,.4); }

.slider { position: absolute; height: 26px; display: flex; border: 1px solid #333; border-radius: 4px; overflow: hidden; background: linear-gradient(#fff, #d6d6d6); }
.slider span { flex: none; display: grid; place-items: center; border-right: 1px solid #333; background: linear-gradient(#e6e6ee, #c6c6d2 9px, #a9a8b8 9px, #9694a4); }
.slider input { appearance: none; flex: 1; min-width: 0; margin: 7px 10px 9px; height: 8px; background: repeating-linear-gradient(90deg, #ccc 0 1px, transparent 1px 12px); border-bottom: 1px solid #c4c4c4; }
.slider input::-webkit-slider-thumb { appearance: none; width: 8px; height: 8px; margin-top: 3px; border: 2px solid #111; background: #fff; transform: rotate(45deg); }
.slider em { position: absolute; top: 2px; font-style: normal; }
.s-grad { left: 16px; top: 408px; width: 234px; }
.s-grad span { width: 82px; }
.s-grad em { left: 190px; }
.s-scale { left: 248px; top: 483px; width: 247px; }
.s-scale span { width: 95px; }
.s-scale em { left: 142px; }

.recent { position: absolute; left: 0; bottom: 1px; height: 35px; display: flex; align-items: center; gap: 12px; padding: 0 14px 0 7px; border: 1px solid #000; border-left: 0; background: linear-gradient(#fafafa, #d0d0d0 45%, #a0a0a0); box-shadow: inset -7px 0 #777; }
.recent svg { width: 23px; height: 23px; }
.gh-status { flex: none; height: 16px; padding: 5px 4px 0 0; border-top: 1px solid #fff; text-align: right; color: #777; line-height: 18px; overflow: hidden; }
```
